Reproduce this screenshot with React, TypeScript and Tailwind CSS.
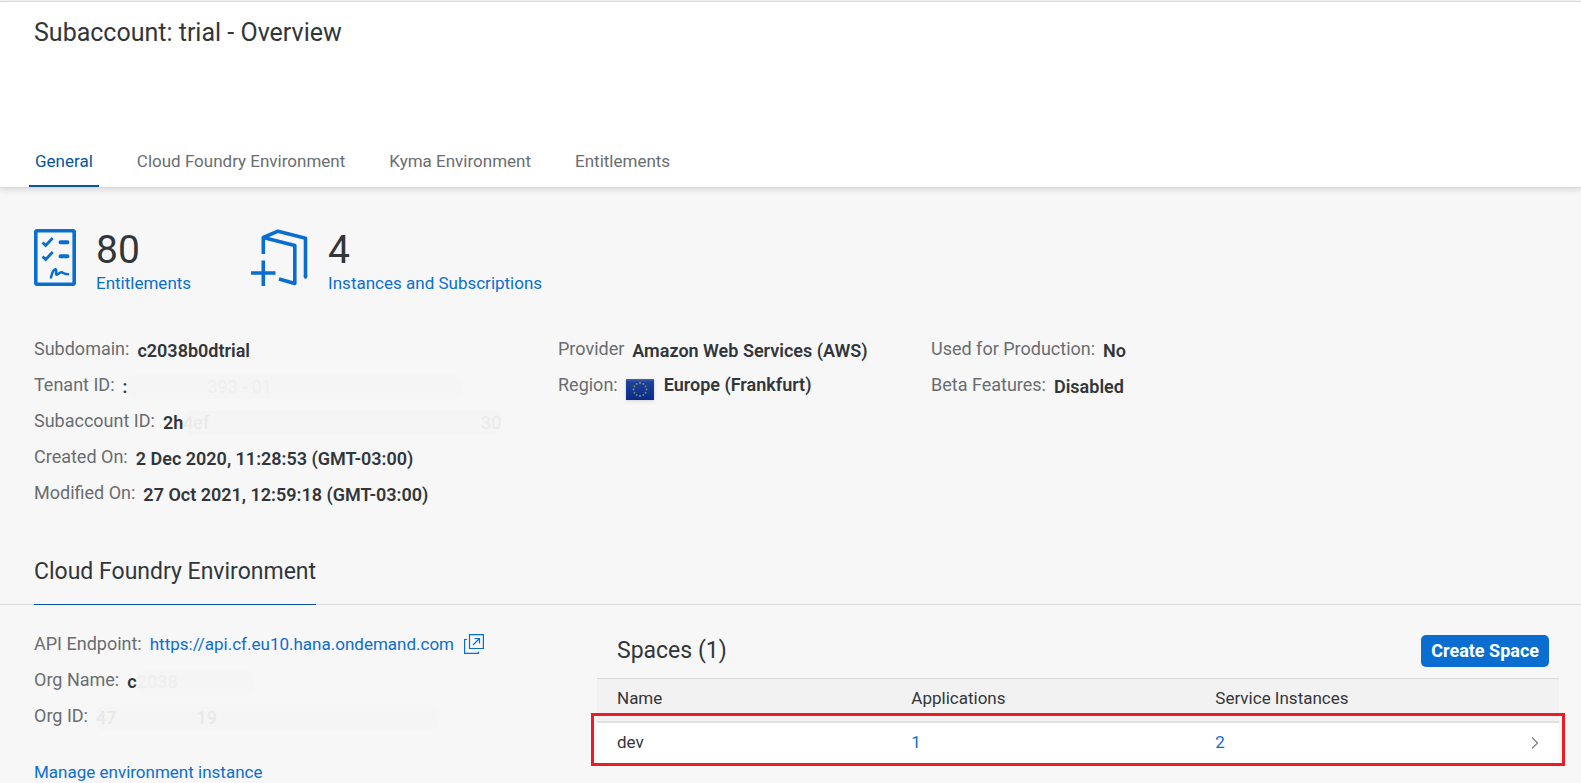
import React from 'react';

const tabs = ['General', 'Cloud Foundry Environment', 'Kyma Environment', 'Entitlements'];

interface FieldProps {
  label: string;
  children: React.ReactNode;
}

const Field: React.FC<FieldProps> = ({ label, children }) => (
  <div className="flex h-9 items-start gap-2 whitespace-nowrap leading-6">
    <dt className="text-[#6a6d70]">{label}</dt>
    <dd className="flex items-start">{children}</dd>
  </div>
);

const Value: React.FC<{ children: React.ReactNode }> = ({ children }) => (
  <span className="pt-[2px] font-semibold text-[#32363a]">{children}</span>
);

const EntitlementsIcon = () => (
  <svg width="42" height="57" viewBox="0 0 42 57" fill="none" stroke="#0a6ed1" strokeLinecap="round" strokeLinejoin="round" aria-hidden="true">
    <rect x="1.8" y="1.8" width="38.4" height="53.4" rx="1.5" strokeWidth="3.6" />
    <path d="M8.500 13.500l3.200 3 7-7.500M8.500 27.500l3.200 3 7-7.500" strokeWidth="2.800" strokeLinecap="butt" strokeLinejoin="miter" />
    <path d="M26.500 13.200h7M26.500 27.200h7" strokeWidth="4" />
    <path d="M17 48.500c.8-3.500 2.500-8 4.300-8.200 2-.2-.2 5.500 1.400 5.400 1.700-.1 2.800-2.500 4.700-2.400 2.200.1 1.800 1.800 6.600 1.900" strokeWidth="2.600" />
  </svg>
);

const InstancesIcon = () => (
  <svg width="57" height="57" viewBox="0 0 57 57" fill="none" stroke="#0a6ed1" strokeWidth="3.600" strokeLinejoin="round" aria-hidden="true">
    <path d="M12.300 25V8.500L27 2.200l27.500 7v38.300" />
    <path d="M12.300 8.500L43.800 16.500v38L28 50" />
    <path d="M54.500 47v1" strokeLinecap="round" />
    <path d="M12.300 31.500V57M0 44h24.500" />
  </svg>
);

const EuropeFlag = () => (
  <svg className="mt-[6px] mr-[10px] drop-shadow" width="28" height="21" viewBox="0 0 28 21" role="img" aria-label="European Union">
    <defs>
      <linearGradient id="flag-blue" x1="0" y1="0" x2="0" y2="1">
        <stop offset="0" stopColor="#4564a8" />
        <stop offset="0.15" stopColor="#1c429c" />
        <stop offset="1" stopColor="#082a86" />
      </linearGradient>
    </defs>
    <rect width="28" height="21" fill="url(#flag-blue)" />
    <g fill="#99945f">
      <circle cx="14" cy="4" r="0.9" />
      <circle cx="17.300" cy="4.900" r="0.9" />
      <circle cx="19.600" cy="7.300" r="0.9" />
      <circle cx="20.500" cy="10.500" r="0.9" />
      <circle cx="19.600" cy="13.700" r="0.9" />
      <circle cx="17.300" cy="16.100" r="0.9" />
      <circle cx="14" cy="17" r="0.9" />
      <circle cx="10.700" cy="16.100" r="0.9" />
      <circle cx="8.400" cy="13.700" r="0.9" />
      <circle cx="7.500" cy="10.500" r="0.9" />
      <circle cx="8.400" cy="7.300" r="0.9" />
      <circle cx="10.700" cy="4.900" r="0.9" />
    </g>
  </svg>
);

const PopoutIcon = () => (
  <svg width="20" height="20" viewBox="0 0 20 20" fill="none" stroke="#0a6ed1" strokeWidth="1.200" aria-hidden="true">
    <path d="M5.500 .6h13.900v13.900H5.500z" />
    <path d="M3 5.500H.6v13.900h13.900V17.500" />
    <path d="M9 11l6.500-6.500M10.500 4.500h5v5" />
  </svg>
);

export default function App() {
  return (
    <div className="min-h-screen bg-[#f7f7f7] pt-px font-['Roboto','Liberation_Sans',sans-serif] text-lg text-[#32363a]">
      <header className="relative border-y border-[#d9d9d9] bg-white shadow-[0_2px_6px_rgba(0,0,0,0.12)]">
        <h1 className="px-[34px] pt-[15px] text-[25px] leading-8">Subaccount: trial - Overview</h1>
        <nav className="mt-[92px] flex gap-8 px-[29px] text-[17px]">
          {tabs.map((tab, i) => (
            <a
              key={tab}
              href="#"
              className={
                i === 0
                  ? 'border-b-2 border-[#0854a0] px-[6px] pt-2 pb-3 leading-6 text-[#0854a0]'
                  : 'border-b-2 border-transparent px-[6px] pt-2 pb-3 leading-6 text-[#6a6d70]'
              }
            >
              {tab}
            </a>
          ))}
        </nav>
      </header>

      <main>
        {/* Counters */}
        <section className="flex gap-[60px] px-[34px] pt-[41px]">
          <div className="flex gap-5">
            <EntitlementsIcon />
            <div>
              <div className="text-[39px] leading-[42px]">80</div>
              <a href="#" className="block text-[17px] leading-6 text-[#0a6ed1]">Entitlements</a>
            </div>
          </div>
          <div className="flex gap-5">
            <InstancesIcon />
            <div>
              <div className="text-[39px] leading-[42px]">4</div>
              <a href="#" className="block text-[17px] leading-6 text-[#0a6ed1]">Instances and Subscriptions</a>
            </div>
          </div>
        </section>

        {/* Subaccount details */}
        <section className="grid grid-cols-[524fr_373fr_650fr] pt-[42px] pl-[34px]">
          <dl>
            <Field label="Subdomain:"><Value>c2038b0dtrial</Value></Field>
            <Field label="Tenant ID:">
              <Value>:</Value>
              <span className="mt-[2px] w-[334px] rounded-lg bg-[#f5f5f5] pl-20 text-[#efefef]">393 - 01</span>
            </Field>
            <Field label="Subaccount ID:">
              <Value>2h</Value>
              <span className="mt-[2px] flex w-[318px] justify-between rounded-lg bg-[#f5f5f5] text-[#eaeaea]">
                <span>4ef</span>
                <span>30</span>
              </span>
            </Field>
            <Field label="Created On:"><Value>2 Dec 2020, 11:28:53 (GMT-03:00)</Value></Field>
            <Field label="Modified On:"><Value>27 Oct 2021, 12:59:18 (GMT-03:00)</Value></Field>
          </dl>
          <dl>
            <Field label="Provider"><Value>Amazon Web Services (AWS)</Value></Field>
            <Field label="Region:">
              <EuropeFlag />
              <span className="font-semibold">Europe (Frankfurt)</span>
            </Field>
          </dl>
          <dl>
            <Field label="Used for Production:"><Value>No</Value></Field>
            <Field label="Beta Features:"><Value>Disabled</Value></Field>
          </dl>
        </section>

        <div className="mt-[31px] flex border-b border-[#d9d9d9] px-[34px]">
          <h2 className="-mb-px border-b border-[#0854a0] pt-2 pb-4 text-[23px] leading-8">Cloud Foundry Environment</h2>
        </div>

        <div className="grid grid-cols-[563fr_984fr] pl-[34px]">
          {/* Organisation */}
          <section className="pt-[27px]">
            <dl>
              <Field label="API Endpoint:">
                <a href="#" className="flex items-start gap-[10px] text-[17px] text-[#0a6ed1]">
                  https://api.cf.eu10.hana.ondemand.com
                  <span className="pt-[2px]"><PopoutIcon /></span>
                </a>
              </Field>
              <Field label="Org Name:">
                <Value>c</Value>
                <span className="mt-[2px] w-[116px] rounded-lg bg-[#f5f5f5] font-semibold text-[#efefef]">2038</span>
              </Field>
              <Field label="Org ID:">
                <span className="mt-[2px] flex w-[342px] gap-20 rounded-lg bg-[#f5f5f5] font-semibold text-[#e9e9e9]">
                  <span>47</span>
                  <span>19</span>
                </span>
              </Field>
            </dl>
            <a href="#" className="mt-5 block text-[17px] leading-6 text-[#0a6ed1]">Manage environment instance</a>
          </section>

          {/* Spaces */}
          <section className="pt-[30px] pr-[22px]">
            <div className="flex items-start justify-between pr-[10px] pb-[11px] pl-5">
              <h3 className="text-[23px] leading-8">Spaces (1)</h3>
              <button type="button" className="h-8 rounded-[5px] bg-[#0a6ed1] px-[10px] font-bold leading-8 text-white">Create Space</button>
            </div>
            <div className="relative">
              <table className="w-full table-fixed border-collapse text-left text-[17px]">
                <thead>
                  <tr className="h-[43px] border-t border-b-2 border-t-[#d9d9d9] border-b-[#e2e2e2] bg-[#f2f2f2]">
                    <th className="w-[30.600%] pb-1 pl-5 font-normal">Name</th>
                    <th className="w-[31.600%] pb-1 pl-5 font-normal">Applications</th>
                    <th className="pb-1 pl-5 font-normal">Service Instances</th>
                    <th className="w-12" aria-label="Open" />
                  </tr>
                </thead>
                <tbody>
                  <tr className="h-[41px] bg-white">
                    <td className="pl-5">dev</td>
                    <td className="pl-5"><a href="#" className="text-[#0a6ed1]">1</a></td>
                    <td className="pl-5"><a href="#" className="text-[#0a6ed1]">2</a></td>
                    <td className="pl-[18px]">
                      <svg width="12" height="12" viewBox="0 0 12 12" fill="none" stroke="#7b7d80" strokeWidth="1.200" aria-hidden="true">
                        <path d="M3 .5L8.500 6 3 11.500" />
                      </svg>
                    </td>
                  </tr>
                </tbody>
              </table>
              <div className="pointer-events-none absolute -inset-x-[6px] -bottom-[3px] h-[53px] border-3 border-[#ed1c24]" />
            </div>
          </section>
        </div>
      </main>
    </div>
  );
}
